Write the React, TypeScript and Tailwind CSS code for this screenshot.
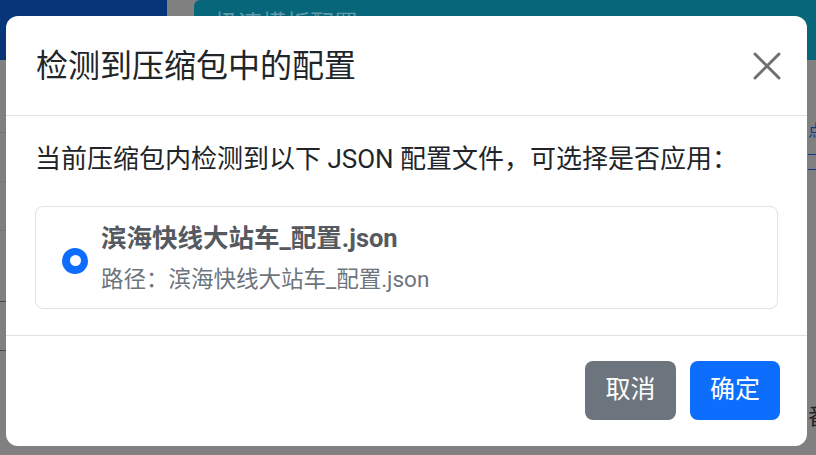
import React, { useState } from 'react';

const FONT = { fontFamily: 'Roboto, "Noto Sans CJK SC", sans-serif' };

const configFiles = [
  { name: '滨海快线大站车_配置.json', path: '滨海快线大站车_配置.json' },
];

// page behind the modal, drawn already dimmed by the backdrop
const PageBehind: React.FC = () => (
  <div className="w-[816px] h-[455px] bg-[#808080] flex flex-col">
    <div className="flex h-[60px]">
      <div className="w-[167px] bg-[#06357a] rounded-br-[6px]" />
      <div className="flex-1 ml-[27px] bg-[#07667a] rounded-tl-[6px] pl-[20px] pt-[6px]">
        <span className="text-[24px] text-[#5f9aa6]">极速模板配置</span>
      </div>
    </div>
    <div className="flex-1 flex justify-between">
      <div className="w-[6px] flex flex-col pt-[72px] gap-[48px]">
        <div className="h-px bg-[#747474]" />
        <div className="h-px bg-[#747474]" />
        <div className="h-px bg-[#747474]" />
        <div className="h-px mt-[22px] bg-[#4a4a4a]" />
        <div className="h-px bg-[#4a4a4a]" />
      </div>
      <div className="w-[8px] flex flex-col pt-[62px] gap-[14px] overflow-hidden">
        <span className="text-[16px] leading-[18px] text-[#0a3a8a] whitespace-nowrap">点</span>
        <div className="h-px bg-[#0a3a8a]" />
        <div className="h-px bg-[#0a3a8a]" />
        <span className="mt-[222px] text-[22px] leading-none text-[#222] whitespace-nowrap">番</span>
      </div>
    </div>
  </div>
);

export default function App() {
  const [selected, setSelected] = useState(0);

  return (
    <div className="relative w-[816px] h-[455px] overflow-hidden" style={FONT}>
      <PageBehind />
      <div className="absolute left-[6px] top-[16px] w-[801px] h-[430px] bg-white rounded-[12px] flex flex-col">
        <div className="h-[100px] flex items-center justify-between pl-[30px] pr-[25px] border-b border-[#dee2e6]">
          <h5 className="text-[32px] text-[#212529] leading-none">检测到压缩包中的配置</h5>
          <button className="w-[30px] h-[30px] flex items-center justify-center">
            <svg width="28" height="28" viewBox="0 0 28 28" fill="none" stroke="#707070" strokeWidth="3" strokeLinecap="round">
              <path d="M2 2L26 26M26 2L2 26" />
            </svg>
          </button>
        </div>

        <div className="flex-1 px-[29px] pt-[27px] border-b border-[#dee2e6]">
          <p className="text-[26px] leading-[32px] text-[#212529] whitespace-nowrap">当前压缩包内检测到以下 JSON 配置文件，可选择是否应用：</p>
          <div className="mt-[31px] flex flex-col">
            {configFiles.map((f, i) => (
              <label key={f.name} onClick={() => setSelected(i)} className="h-[103px] flex items-center gap-[13px] pl-[26px] border border-[#dee2e6] rounded-[8px]">
                <span className={`w-[26px] h-[26px] mt-[6px] rounded-full flex items-center justify-center ${selected === i ? 'bg-[#0d6efd]' : 'border border-[#dee2e6]'}`}>
                  <span className="w-[11px] h-[11px] rounded-full bg-white" />
                </span>
                <div className="flex flex-col gap-[14px]">
                  <span className="text-[25.5px] leading-[28px] font-bold text-[#555a60] whitespace-nowrap">{f.name}</span>
                  <span className="text-[22.5px] leading-[26px] text-[#6c757d] whitespace-nowrap">路径：{f.path}</span>
                </div>
              </label>
            ))}
          </div>
        </div>

        <div className="h-[110px] flex items-center justify-end gap-[14px] pr-[27px] pb-[2px]">
          <button className="w-[91px] h-[59px] rounded-[8px] bg-[#6c757d] text-white text-[25px]">取消</button>
          <button className="w-[90px] h-[59px] rounded-[8px] bg-[#0d6efd] text-white text-[25px]">确定</button>
        </div>
      </div>
    </div>
  );
}
